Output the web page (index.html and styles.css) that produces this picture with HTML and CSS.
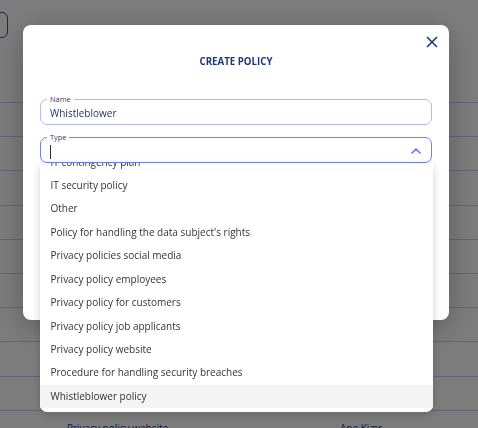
FILE: index.html
```html
<!DOCTYPE html>
<html lang="en">
<head>
  <meta charset="UTF-8">
  <meta name="viewport" content="width=device-width, initial-scale=1.0">
  <title>Create Policy</title>
  <link rel="stylesheet" href="styles.css">
</head>
<body>
  <!-- page behind the dialog -->
  <div class="page">
    <div class="toolbar">
      <div class="tool-btn"></div>
    </div>
    <div class="rows">
      <div class="row"></div>
      <div class="row"></div>
      <div class="row"></div>
      <div class="row"></div>
      <div class="row"></div>
      <div class="row"></div>
      <div class="row"></div>
      <div class="row"></div>
      <div class="row"></div>
      <div class="row last">
        <span class="cell-name">Privacy policy website</span>
        <span class="cell-owner">Ane Kjær</span>
      </div>
    </div>
  </div>

  <!-- Create policy modal -->
  <div class="overlay">
    <div class="modal">
      <button class="close" aria-label="Close">
        <svg width="12" height="12" viewBox="0 0 12 12"><path d="M1 1 L11 11 M11 1 L1 11" stroke="#1d3878" stroke-width="1.6" fill="none"/></svg>
      </button>
      <h3 class="modal-title">CREATE POLICY</h3>

      <div class="field">
        <span class="field-label">Name</span>
        <div class="field-value">Whistleblower</div>
      </div>

      <div class="field field-focus">
        <span class="field-label">Type</span>
        <div class="field-value"><span class="caret"></span></div>
        <svg class="chevron" width="10" height="6" viewBox="0 0 10 6"><path d="M1 5 L5 1 L9 5" stroke="#6b7cf2" stroke-width="1.7" fill="none" stroke-linecap="round" stroke-linejoin="round"/></svg>

        <div class="dropdown">
          <ul class="options">
            <li>IT contingency plan</li>
            <li>IT security policy</li>
            <li>Other</li>
            <li>Policy for handling the data subject's rights</li>
            <li>Privacy policies social media</li>
            <li>Privacy policy employees</li>
            <li>Privacy policy for customers</li>
            <li>Privacy policy job applicants</li>
            <li>Privacy policy website</li>
            <li>Procedure for handling security breaches</li>
            <li class="active">Whistleblower policy</li>
          </ul>
        </div>
      </div>
    </div>
  </div>
</body>
</html>
```

FILE: styles.css
```css
/* Global Reset */
* {
  margin: 0;
  padding: 0;
  box-sizing: border-box;
}

body {
  font-family: 'Open Sans', 'Noto Sans', Arial, sans-serif;
  width: 478px;
  height: 428px;
  overflow: hidden;
  background: #fff;
}

/* Page behind the modal */
.page {
  height: 428px;
  background: #fff;
}

.toolbar {
  height: 102px;
  padding-top: 12px;
}

.tool-btn {
  width: 60px;
  height: 26px;
  margin-left: -52px;
  border: 1px solid #4150b8;
  border-radius: 6px;
  background: #fff;
}

.rows {
  border-top: 1px solid #c9cdf2;
}

.row {
  height: 34.2px;
  border-bottom: 1px solid #c9cdf2;
  display: flex;
  align-items: flex-end;
  padding-left: 67px;
  font-size: 10px;
  color: #1d3878;
}

.row.last {
  border-bottom: none;
  align-items: flex-start;
  padding-top: 10px;
}

.cell-name {
  width: 273px;
}

/* Overlay & modal */
.overlay {
  position: fixed;
  left: 0;
  top: 0;
  width: 100%;
  height: 100%;
  background: rgba(0, 0, 0, 0.515);
}

.modal {
  position: relative;
  margin: 25px 0 0 23px;
  width: 426px;
  height: 295px;
  background: #fff;
  border-radius: 8px;
  padding: 30px 17px 0;
  box-shadow: 0 6px 28px rgba(0, 0, 0, 0.28);
}

.close {
  position: absolute;
  top: 11px;
  right: 11px;
  width: 12px;
  height: 12px;
  border: none;
  background: none;
  cursor: pointer;
  display: flex;
}

.modal-title {
  text-align: center;
  font-size: 9.7px;
  font-weight: 700;
  color: #1d3878;
  line-height: 13px;
  margin-bottom: 31px;
}

/* Outlined fields */
.field {
  position: relative;
  height: 26px;
  border: 1px solid #afb9f7;
  border-radius: 7px;
  margin-bottom: 12px;
}

.field-label {
  position: absolute;
  top: -6px;
  left: 6px;
  padding: 0 3px;
  background: #fff;
  font-size: 7.4px;
  line-height: 10px;
  color: #2a3c78;
}

.field-value {
  height: 100%;
  display: flex;
  align-items: center;
  padding: 2px 9px 0;
  font-size: 10px;
  color: #223567;
}

.field-focus {
  border: 1.5px solid #6e80f4;
}

.field-focus .field-value {
  padding-left: 8.5px;
}

.caret {
  display: block;
  width: 1px;
  height: 14px;
  background: #333;
  margin-top: 2px;
}

.chevron {
  position: absolute;
  right: 10px;
  top: 10px;
}

/* Dropdown list */
.dropdown {
  position: absolute;
  left: -1.5px;
  right: -1.5px;
  top: 25px;
  height: 249px;
  background: #fff;
  border-radius: 0 0 7px 7px;
  box-shadow: 0 3px 10px rgba(0, 0, 0, 0.18);
  overflow: hidden;
}

.options {
  list-style: none;
  margin-top: -12.5px;
}

.options li {
  height: 23.45px;
  line-height: 23.45px;
  padding-left: 11px;
  font-size: 10px;
  color: #333;
  white-space: nowrap;
}

.options li.active {
  background: #f4f4f4;
}
```
